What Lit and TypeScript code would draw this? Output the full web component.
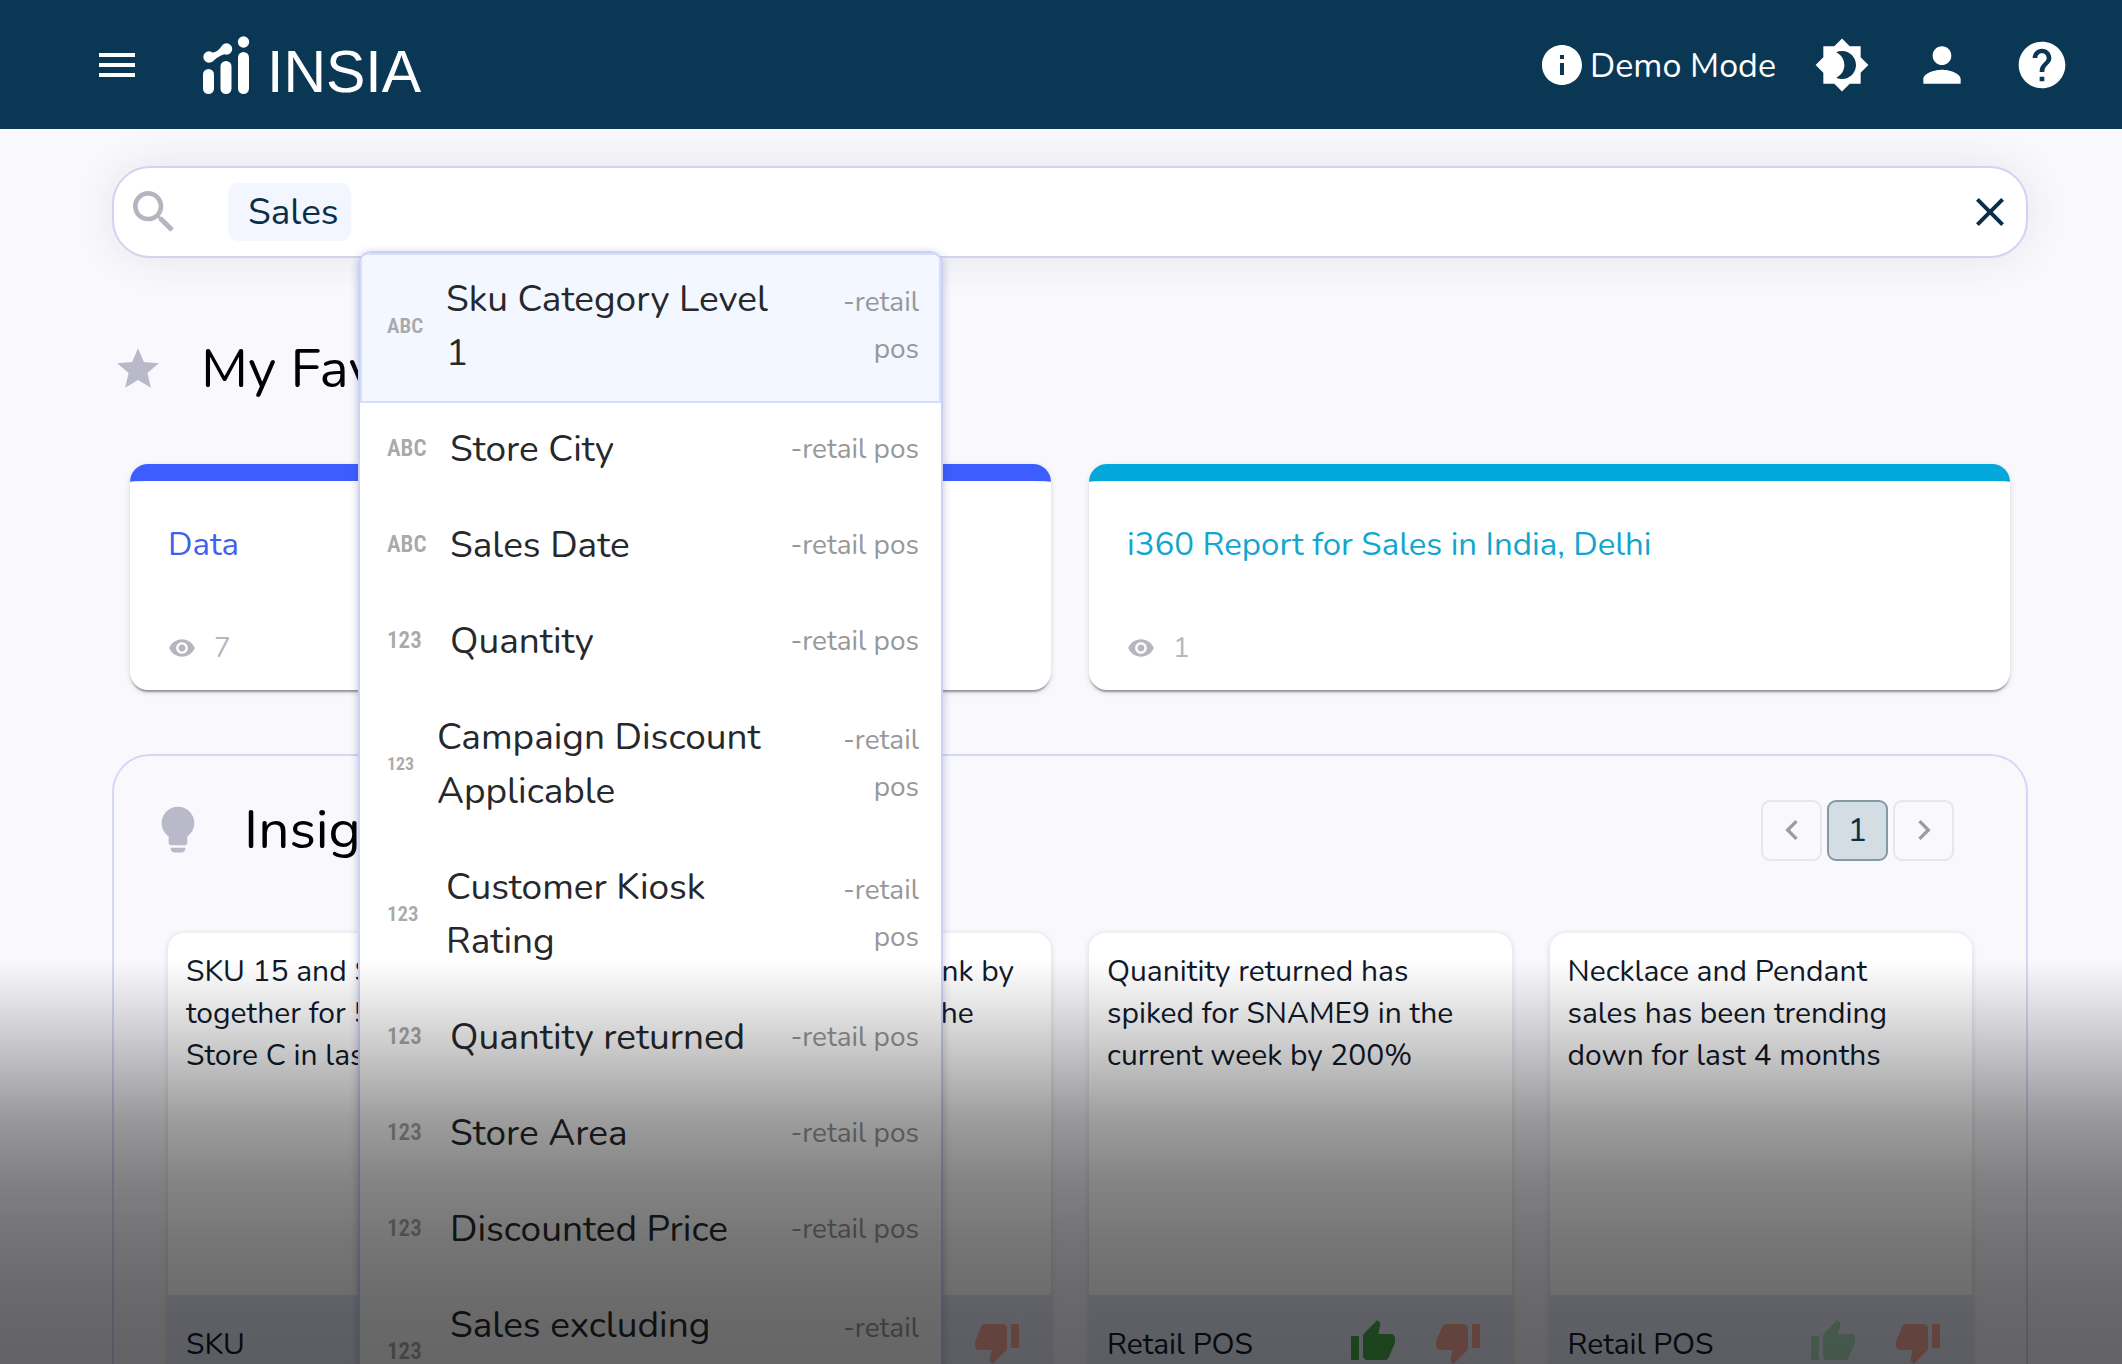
import { LitElement, html, css, svg } from "lit";
import { customElement, state } from "lit/decorators.js";
import { classMap } from "lit/directives/class-map.js";

const ICONS = {
  menu: "M3 18h18v-2H3v2zm0-5h18v-2H3v2zm0-7v2h18V6H3z",
  info: "M12 2C6.48 2 2 6.48 2 12s4.48 10 10 10 10-4.48 10-10S17.52 2 12 2zm1 15h-2v-6h2v6zm0-8h-2V7h2v2z",
  theme:
    "M20 8.69V4h-4.69L12 .69 8.69 4H4v4.69L.69 12 4 15.31V20h4.69L12 23.31 15.31 20H20v-4.69L23.31 12 20 8.69zM12 18c-.89 0-1.74-.2-2.5-.55C11.56 16.5 13 14.42 13 12s-1.44-4.5-3.5-5.45C10.26 6.2 11.11 6 12 6c3.31 0 6 2.69 6 6s-2.69 6-6 6z",
  person:
    "M12 12c2.21 0 4-1.79 4-4s-1.79-4-4-4-4 1.79-4 4 1.79 4 4 4zm0 2c-2.67 0-8 1.34-8 4v2h16v-2c0-2.66-5.33-4-8-4z",
  help:
    "M12 2C6.48 2 2 6.48 2 12s4.48 10 10 10 10-4.48 10-10S17.52 2 12 2zm1 17h-2v-2h2v2zm2.07-7.75l-.9.92C13.45 12.9 13 13.5 13 15h-2v-.5c0-1.1.45-2.1 1.17-2.83l1.24-1.26c.37-.36.59-.86.59-1.41 0-1.1-.9-2-2-2s-2 .9-2 2H8c0-2.21 1.79-4 4-4s4 1.79 4 4c0 .88-.36 1.68-.93 2.25z",
  search:
    "M15.5 14h-.79l-.28-.27C15.41 12.59 16 11.11 16 9.5 16 5.91 13.09 3 9.5 3S3 5.91 3 9.5 5.91 16 9.5 16c1.61 0 3.09-.59 4.23-1.57l.27.28v.79l5 4.99L20.49 19l-4.99-5zm-6 0C7.01 14 5 11.99 5 9.5S7.01 5 9.5 5 14 7.01 14 9.5 11.99 14 9.5 14z",
  close: "M19 6.41L17.59 5 12 10.59 6.41 5 5 6.41 10.59 12 5 17.59 6.41 19 12 13.41 17.59 19 19 17.59 13.41 12z",
  star: "M12 17.27L18.18 21l-1.64-7.03L22 9.24l-7.19-.61L12 2 9.19 8.63 2 9.24l5.46 4.73L5.82 21z",
  bulb:
    "M12 2C8.1 2 5 5.1 5 9c0 2.400 1.200 4.500 3 5.700v2.800c0 .6.4 1 1 1h6c.6 0 1-.4 1-1v-2.800c1.800-1.200 3-3.300 3-5.700 0-3.900-3.100-7-7-7zM8.800 19.600c0 1.200.7 2 1.700 2h3c1 0 1.700-.8 1.700-2z",
  eye:
    "M12 4.500C7 4.500 2.730 7.610 1 12c1.730 4.390 6 7.500 11 7.500s9.270-3.110 11-7.500c-1.730-4.390-6-7.500-11-7.500zM12 17c-2.760 0-5-2.240-5-5s2.240-5 5-5 5 2.240 5 5-2.240 5-5 5zm0-8c-1.660 0-3 1.340-3 3s1.340 3 3 3 3-1.340 3-3-1.340-3-3-3z",
  prev: "M15.41 7.41L14 6l-6 6 6 6 1.41-1.41L10.83 12z",
  next: "M10 6L8.590 7.410 13.170 12l-4.580 4.590L10 18l6-6z",
  up: "M1 21h4V9H1v12zm22-11c0-1.1-.9-2-2-2h-6.310l.95-4.570.03-.32c0-.41-.17-.79-.44-1.060L14.170 1 7.590 7.590C7.220 7.950 7 8.450 7 9v10c0 1.100.9 2 2 2h9c.83 0 1.540-.5 1.840-1.220l3.020-7.050c.09-.23.14-.47.14-.73v-2z",
  down: "M15 3H6c-.83 0-1.540.5-1.840 1.220l-3.020 7.050c-.09.23-.14.47-.14.73v2c0 1.100.9 2 2 2h6.310l-.95 4.570-.03.32c0 .41.17.79.44 1.060L9.830 23l6.590-6.590c.36-.36.58-.86.58-1.410V5c0-1.100-.9-2-2-2zm4 0v12h4V3h-4z",
};

const icon = (name: keyof typeof ICONS, size = "md") =>
  html`<svg class="icon ${size}" viewBox="0 0 24 24" aria-hidden="true">${svg`<path d=${ICONS[name]}></path>`}</svg>`;

interface Suggestion {
  kind: "ABC" | "123";
  name: string[];
  size?: "small" | "medium";
}

const SUGGESTIONS: Suggestion[] = [
  { kind: "ABC", name: ["Sku Category Level", "1"], size: "medium" },
  { kind: "ABC", name: ["Store City"] },
  { kind: "ABC", name: ["Sales Date"] },
  { kind: "123", name: ["Quantity"] },
  { kind: "123", name: ["Campaign Discount", "Applicable"], size: "small" },
  { kind: "123", name: ["Customer Kiosk", "Rating"], size: "medium" },
  { kind: "123", name: ["Quantity returned"] },
  { kind: "123", name: ["Store Area"] },
  { kind: "123", name: ["Discounted Price"] },
  { kind: "123", name: ["Sales excluding", "Tax"] },
];

const FAVOURITES = [
  { title: "Data", views: 7, tone: "blue" },
  { title: "i360 Report for Sales in India, Delhi", views: 1, tone: "cyan" },
];

const INSIGHTS = [
  { lines: ["SKU 15 and SKU 18 sold", "together for 50 times in", "Store C in last week"], source: "SKU", liked: false },
  { lines: ["Store AM improved rank by", "two positions during the", "last month"], source: "Retail POS", liked: false },
  { lines: ["Quanitity returned has", "spiked for SNAME9 in the", "current week by 200%"], source: "Retail POS", liked: true },
  { lines: ["Necklace and Pendant", "sales has been trending", "down for last 4 months"], source: "Retail POS", liked: false },
];

const stack = (lines: string[]) => lines.map((line, i) => (i ? html`<br />${line}` : line));

@customElement("app-root")
export class AppRoot extends LitElement {
  @state() private active = 0;

  static styles = css`
    :host {
      display: block;
      position: relative;
      height: 100vh;
      overflow: hidden;
      background: #f8f8fd;
      color: #000;
      font-family: Nunito, "Open Sans", "Noto Sans", sans-serif;
      font-weight: 400;
    }
    * {
      box-sizing: border-box;
    }
    button {
      display: flex;
      align-items: center;
      justify-content: center;
      padding: 0;
      border: 0;
      background: none;
      color: inherit;
      font: inherit;
      cursor: pointer;
    }
    h1,
    h2,
    p,
    ul {
      margin: 0;
      padding: 0;
      font-weight: inherit;
    }
    .icon {
      flex: none;
      display: block;
      fill: currentColor;
      width: 48px;
      height: 48px;
    }
    .icon.xs {
      width: 28px;
      height: 28px;
    }
    .icon.sm {
      width: 40px;
      height: 40px;
    }
    .icon.star {
      width: 50px;
      height: 50px;
    }
    .icon.lg {
      width: 56px;
      height: 56px;
    }

    .topbar {
      display: flex;
      align-items: center;
      height: 129px;
      padding: 0 52px 0 93px;
      background: #0a3754;
      color: #fff;
    }
    .brand {
      display: flex;
      align-items: flex-end;
      margin-left: 62px;
      gap: 14px;
      color: inherit;
      text-decoration: none;
      font-family: "Liberation Sans", Arial, sans-serif;
      font-size: 59px;
      font-weight: 400;
      line-height: 46px;
    }
    .mark {
      width: 50px;
      height: 60px;
      fill: #fff;
    }
    .tools {
      display: flex;
      align-items: center;
      gap: 44px;
      margin-left: auto;
    }
    .demo {
      display: flex;
      align-items: center;
      gap: 4px;
      margin-right: -6px;
      font-size: 34px;
      line-height: 48px;
    }
    .demo span {
      padding-top: 2px;
    }

    main {
      padding: 37px 94px 0 112px;
    }
    .search {
      position: relative;
      display: flex;
      align-items: center;
      height: 92px;
      padding: 0 12px;
      border: 2px solid #d0d4f3;
      border-radius: 38px;
      background: #fff;
      box-shadow: 0 0 40px rgba(60, 60, 60, 0.1);
    }
    .search > .icon {
      color: #b6b4c1;
    }
    .chip {
      height: 58px;
      margin-left: 46px;
      padding: 0 12px 0 20px;
      border-radius: 10px;
      background: #f3f6fe;
      color: #0a2f4b;
      font-size: 37px;
    }
    .query {
      flex: 1;
      min-width: 0;
      height: 58px;
      margin: 0 12px;
      border: 0;
      outline: 0;
      background: transparent;
      font: inherit;
      font-size: 37px;
    }
    .clear {
      color: #0a2f4b;
    }

    .suggestions {
      position: absolute;
      z-index: 2;
      top: 83px;
      left: 244px;
      width: 585px;
      border: 2px solid #ccd2f3;
      border-radius: 14px 14px 0 0;
      background: #fff;
      box-shadow: 0 2px 8px rgba(40, 50, 120, 0.28);
      list-style: none;
      overflow: hidden;
    }
    .option {
      display: flex;
      align-items: center;
      gap: 27px;
      width: 100%;
      padding: 17px 20px 21px 25px;
      border: 2px solid transparent;
      text-align: left;
    }
    .option.active {
      background: #f3f7ff;
      border-color: #d6ddf9;
    }
    .kind {
      flex: none;
      width: 36px;
      color: #a9a9ab;
      font-family: "Roboto Condensed", Roboto, sans-serif;
      font-size: 23px;
      font-weight: 600;
      line-height: 24px;
    }
    .kind.medium {
      width: 32px;
      font-size: 21px;
    }
    .kind.small {
      width: 23px;
      font-size: 18px;
    }
    .name {
      flex: 1;
      color: #26282c;
      font-size: 37px;
      line-height: 54px;
      white-space: nowrap;
    }
    .origin {
      color: #98989a;
      font-size: 28px;
      line-height: 47px;
      text-align: right;
      white-space: nowrap;
    }

    .heading {
      display: flex;
      align-items: center;
      gap: 38px;
      font-size: 55px;
      line-height: 74px;
    }
    .heading .icon {
      color: #bab9ca;
    }
    .favourites {
      padding: 74px 18px 0 1px;
    }
    .cards {
      display: grid;
      grid-template-columns: 1fr 1fr;
      gap: 38px;
      margin: 58px 0 0 17px;
    }
    .card {
      display: flex;
      flex-direction: column;
      justify-content: space-between;
      height: 226px;
      padding: 40px 38px 20px;
      border-top: 17px solid;
      border-radius: 18px;
      background: #fff;
      box-shadow: 0 3px 2px -1px rgba(0, 0, 0, 0.35), 0 2px 6px rgba(0, 0, 0, 0.12);
      text-decoration: none;
      font-size: 33px;
      line-height: 48px;
    }
    .blue {
      border-color: #3d5eff;
      color: #3f5ff0;
    }
    .cyan {
      border-color: #02a8d9;
      color: #12a6cf;
    }
    .views {
      display: flex;
      align-items: center;
      gap: 18px;
      color: #b6b5c2;
      font-size: 28px;
      line-height: 44px;
    }

    .insights {
      margin-top: 64px;
      padding: 37px 54px 60px;
      border: 2px solid #d3d8f6;
      border-radius: 38px;
    }
    .insights-head {
      display: flex;
      justify-content: space-between;
      align-items: center;
      padding-right: 18px;
    }
    .insights-head .heading {
      margin-left: -18px;
    }
    .pager {
      display: flex;
      gap: 5px;
    }
    .pager button {
      width: 61px;
      height: 61px;
      border: 2px solid #e7e6ef;
      border-radius: 9px;
      color: #9c9ba3;
      font-size: 33px;
    }
    .pager .current {
      border-color: #8498a6;
      background: #d5dde4;
      color: #0a2f4b;
    }
    .tiles {
      display: grid;
      grid-template-columns: repeat(4, 1fr);
      gap: 38px;
      margin-top: 66px;
    }
    .tile {
      display: flex;
      flex-direction: column;
      height: 456px;
      border-radius: 16px;
      background: #fff;
      box-shadow: 0 1px 6px rgba(0, 0, 0, 0.14);
      overflow: hidden;
      color: #10182a;
      font-size: 30px;
      line-height: 42px;
    }
    .tile p {
      flex: 1;
      padding: 18px 18px 0;
      white-space: nowrap;
    }
    .tile footer {
      display: flex;
      align-items: center;
      gap: 37px;
      height: 94px;
      padding: 0 30px 0 18px;
      background: #e4e8f6;
    }
    .tile footer span {
      margin-right: auto;
      padding-top: 6px;
    }
    .up {
      color: #a9d8b8;
    }
    .up.on {
      color: #47a64b;
    }
    .down {
      color: #f3a596;
    }

    .fade {
      position: absolute;
      z-index: 3;
      inset: auto 0 0;
      height: 404px;
      pointer-events: none;
      background: linear-gradient(
        rgba(0, 0, 0, 0),
        rgba(0, 0, 0, 0.1) 11%,
        rgba(0, 0, 0, 0.24) 25%,
        rgba(0, 0, 0, 0.38) 39%,
        rgba(0, 0, 0, 0.48) 54%,
        rgba(0, 0, 0, 0.54) 70%,
        rgba(0, 0, 0, 0.59) 88%,
        rgba(0, 0, 0, 0.6)
      );
    }
  `;

  private renderSuggestion(item: Suggestion, index: number) {
    const origin = item.name.length > 1 ? ["-retail", "pos"] : ["-retail pos"];
    return html`<li>
      <button
        class=${classMap({ option: true, active: index === this.active })}
        @mouseenter=${() => (this.active = index)}
      >
        <span class="kind ${item.size ?? ""}">${item.kind}</span>
        <span class="name">${stack(item.name)}</span>
        <span class="origin">${stack(origin)}</span>
      </button>
    </li>`;
  }

  render() {
    return html`
      <header class="topbar">
        <button aria-label="Menu">${icon("menu")}</button>
        <a class="brand" href="#">
          <svg class="mark" viewBox="0 0 50 60" aria-hidden="true">
            <rect x="0" y="34" width="11" height="25" rx="5.500"></rect>
            <rect x="17.500" y="26" width="11" height="33" rx="5.500"></rect>
            <rect x="35" y="17" width="11" height="42" rx="5.500"></rect>
            <circle cx="40.500" cy="7" r="5.700"></circle>
            <circle cx="6" cy="22" r="5.700"></circle>
            <circle cx="23.500" cy="14" r="5.700"></circle>
            <path d="M3 17.200Q12 20 18 12L27 18.500Q18 18 9 27z"></path>
          </svg>
          <span>INSIA</span>
        </a>
        <div class="tools">
          <div class="demo">${icon("info")}<span>Demo Mode</span></div>
          <button aria-label="Theme">${icon("theme", "lg")}</button>
          <button aria-label="Account">${icon("person", "lg")}</button>
          <button aria-label="Help">${icon("help", "lg")}</button>
        </div>
      </header>

      <main>
        <div class="search">
          ${icon("search", "lg")}
          <button class="chip">Sales</button>
          <input class="query" type="text" aria-label="Search" />
          <button class="clear" aria-label="Clear">${icon("close")}</button>
          <ul class="suggestions">
            ${SUGGESTIONS.map((item, i) => this.renderSuggestion(item, i))}
          </ul>
        </div>

        <section class="favourites">
          <h1 class="heading">${icon("star", "star")}My Favourites</h1>
          <div class="cards">
            ${FAVOURITES.map(
              (card) => html`<a class="card ${card.tone}" href="#">
                <span>${card.title}</span>
                <span class="views">${icon("eye", "xs")}${card.views}</span>
              </a>`
            )}
          </div>
        </section>

        <section class="insights">
          <div class="insights-head">
            <h2 class="heading">${icon("bulb", "lg")}Insights</h2>
            <nav class="pager" aria-label="Pages">
              <button aria-label="Previous">${icon("prev", "sm")}</button>
              <button class="current" aria-current="page">1</button>
              <button aria-label="Next">${icon("next", "sm")}</button>
            </nav>
          </div>
          <div class="tiles">
            ${INSIGHTS.map(
              (tile) => html`<article class="tile">
                <p>${stack(tile.lines)}</p>
                <footer>
                  <span>${tile.source}</span>
                  <button class=${classMap({ up: true, on: tile.liked })} aria-label="Like">${icon("up")}</button>
                  <button class="down" aria-label="Dislike">${icon("down")}</button>
                </footer>
              </article>`
            )}
          </div>
        </section>
      </main>
      <div class="fade"></div>
    `;
  }
}
